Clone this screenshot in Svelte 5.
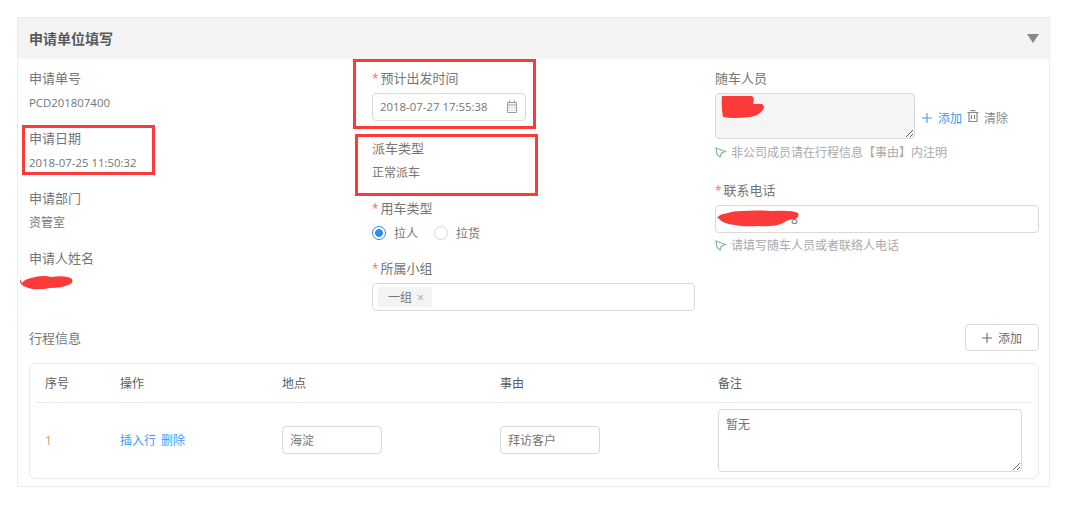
<script>
  const leftFields = [
    { label: '申请单号', value: 'PCD201807400', latin: true },
    { label: '申请日期', value: '2018-07-25 11:50:32', latin: true },
    { label: '申请部门', value: '资管室' },
    { label: '申请人姓名', value: '' },
  ]
</script>

{#snippet hintIcon()}
  <svg width="12" height="11" viewBox="0 0 12 11" fill="none" stroke="#7dbb8c" stroke-width="1.2">
    <path d="M1 1l9.500 3.500-4 1.500-1.500 4-3-2.500-1-6.500z" />
  </svg>
{/snippet}

{#snippet plusIcon()}
  <svg class="plus" width="10" height="10" viewBox="0 0 10 10" fill="none" stroke="currentColor" stroke-width="1.100">
    <path d="M5 0v10M0 5h10" />
  </svg>
{/snippet}

<div class="card">
  <div class="card-head">
    <span class="title">申请单位填写</span>
    <span class="caret"></span>
  </div>
  <div class="card-body">
    <div class="columns">
      <div class="col">
        {#each leftFields as f}
          <div class="field">
            <div class="label">{f.label}</div>
            <div class="value" class:latin={f.latin}>{f.value}</div>
          </div>
        {/each}
      </div>

      <div class="col">
        <div class="field tall">
          <div class="label"><i>*</i>预计出发时间</div>
          <div class="input date">
            <span class="latin">2018-07-27 17:55:38</span>
            <svg width="12" height="13" viewBox="0 0 12 13" fill="none" stroke="#999">
              <path d="M1.500 2.500h9v10h-9zM1.500 5h9M3.500 .5v2M8.500 .5v2" />
              <path d="M3 7.500h1M5.500 7.500h1M8 7.500h1M3 10h1M5.500 10h1M8 10h1" stroke="#aaa" />
            </svg>
          </div>
        </div>
        <div class="field">
          <div class="label">派车类型</div>
          <div class="value">正常派车</div>
        </div>
        <div class="field">
          <div class="label"><i>*</i>用车类型</div>
          <div class="radios">
            <span class="radio on"></span><span class="radio-text">拉人</span>
            <span class="radio"></span><span class="radio-text">拉货</span>
          </div>
        </div>
        <div class="field">
          <div class="label"><i>*</i>所属小组</div>
          <div class="input tags">
            <span class="tag">一组<b>×</b></span>
          </div>
        </div>
      </div>

      <div class="col">
        <div class="label"><span>随车人员</span></div>
        <div class="people">
          <textarea class="people-area" disabled></textarea>
          <span class="link add">{@render plusIcon()}添加</span>
          <svg class="trash" width="12" height="12" viewBox="0 0 12 12" fill="none" stroke="#8a8a8a" stroke-width="1.200">
            <path d="M.5 2.500h11M2 2.500v9h8v-9M3.500 .7h5M4.500 5v4M7.500 5v4" />
          </svg>
          <span class="clear">清除</span>
        </div>
        <div class="hint">
          {@render hintIcon()}
          非公司成员请在行程信息【事由】内注明
        </div>
        <div class="label phone"><i>*</i>联系电话</div>
        <div class="input phone-input"><span>8</span></div>
        <div class="hint second">
          {@render hintIcon()}
          请填写随车人员或者联络人电话
        </div>
      </div>
    </div>

    <div class="trip-head">
      <span class="label">行程信息</span>
      <button class="add-btn">{@render plusIcon()}添加</button>
    </div>

    <div class="trip">
      <div class="row head">
        <span class="no">序号</span>
        <span class="op">操作</span>
        <span class="place">地点</span>
        <span class="reason">事由</span>
        <span>备注</span>
      </div>
      <div class="row">
        <span class="no num">1</span>
        <span class="op link"><span>插入行</span><span>删除</span></span>
        <span class="place"><span class="input small">海淀</span></span>
        <span class="reason"><span class="input small">拜访客户</span></span>
        <textarea class="note">暂无</textarea>
      </div>
    </div>
  </div>
</div>

<!-- red marks drawn over the screenshot -->
<div class="mark" style="left:22px;top:125px;width:133px;height:50px"></div>
<div class="mark" style="left:353px;top:59px;width:183px;height:70px"></div>
<div class="mark" style="left:355px;top:134px;width:183px;height:62px"></div>
<svg class="scribble" width="1066" height="505" fill="#fd3a3a">
  <path d="M722 96h30q3 2 1 8h9q4 3 0 7-4 5-12 6-18 2-27 0-2-10-1-21z" />
  <path d="M717 218q2-4 11-5 4-2 14-2 14-1 30 0 20-1 26 2 2 4-3 6-6 0-12 4-8 4-24 3-16 1-24-1-12-1-17-7z" />
  <path d="M22 283q2-4 13-6 9-2 16 0 16-2 21 2 2 4-4 6-6 3-18 3-16 3-24-1-7-2-6-8z" />
</svg>

<style>
  :global(body) {
    margin: 0;
    background: #fff;
  }
  .card {
    box-sizing: border-box;
    width: 1033px;
    height: 470px;
    margin: 17px 0 0 17px;
    border: 1px solid #ececec;
    font-family: 'Open Sans', 'Noto Sans CJK SC', sans-serif;
    font-size: 12px;
    color: #757575;
  }
  .card-head {
    box-sizing: border-box;
    display: flex;
    align-items: center;
    justify-content: space-between;
    height: 41px;
    padding: 0 10px 1px 11px;
    background: #f4f4f4;
  }
  .title {
    font-size: 14px;
    font-weight: 700;
    color: #5a5a5a;
  }
  .caret {
    width: 0;
    height: 0;
    border-left: 6.500px solid transparent;
    border-right: 6.500px solid transparent;
    border-top: 9px solid #888;
  }
  .card-body {
    padding: 10px 10px 0 11px;
  }
  .columns {
    display: grid;
    grid-template-columns: 343px 343px 324px;
    height: 255px;
  }
  .col:nth-child(2) {
    padding-right: 20px;
  }
  .field {
    height: 60px;
  }
  .field.tall {
    height: 70px;
  }
  .label {
    font-size: 13px;
    line-height: 18px;
    height: 20px;
    color: #757575;
  }
  .label i {
    font-style: normal;
    color: #f56c6c;
    margin-right: 2px;
    font-size: 12px;
  }
  .value {
    margin-top: 5px;
    line-height: 18px;
  }
  .latin {
    font-size: 11.400px;
  }
  .input {
    box-sizing: border-box;
    display: flex;
    align-items: center;
    height: 28px;
    margin-top: 4px;
    padding: 0 7px;
    border: 1px solid #d9d9d9;
    border-radius: 4px;
    background: #fff;
  }
  .date {
    justify-content: space-between;
    width: 154px;
    padding-bottom: 1px;
  }
  .radios {
    display: flex;
    align-items: center;
    height: 18px;
    margin-top: 5px;
  }
  .radio {
    box-sizing: border-box;
    width: 14px;
    height: 14px;
    border: 1px solid #d9d9d9;
    border-radius: 50%;
  }
  .radio.on {
    border-color: #2d8cf0;
    background: radial-gradient(circle, #2d8cf0 0 3.600px, #fff 4.200px);
  }
  .radio-text {
    margin: 0 16px 0 8px;
  }
  .tags {
    padding: 0 5px;
  }
  .tag {
    display: flex;
    align-items: center;
    height: 20px;
    padding: 0 8px 0 10px;
    border-radius: 3px;
    background: #f3f3f3;
  }
  .tag b {
    font-weight: 400;
    margin-left: 5px;
    color: #a5a5a5;
  }
  .people {
    display: flex;
    align-items: center;
    margin-top: 4px;
    height: 46px;
  }
  .people-area {
    box-sizing: border-box;
    flex: none;
    width: 200px;
    height: 46px;
    margin: 0 7px 0 0;
    border: 1px solid #d9d9d9;
    border-radius: 4px;
    background: #f5f5f5;
    resize: both;
    outline: none;
  }
  .add {
    display: flex;
    align-items: center;
    margin-right: 5px;
    padding-top: 3px;
  }
  .plus {
    margin-right: 6px;
  }
  .trash {
    margin-right: 5px;
  }
  .clear {
    color: #8a8a8a;
    padding-top: 3px;
  }
  .link {
    color: #3d9bf5;
  }
  .hint {
    display: flex;
    align-items: center;
    gap: 4px;
    height: 20px;
    margin-top: 3px;
    color: #aaa;
  }
  .hint.second {
    margin-top: 2px;
  }
  .phone {
    margin-top: 19px;
  }
  .phone-input span {
    margin-left: 68px;
  }
  .trip-head {
    display: flex;
    align-items: center;
    justify-content: space-between;
    height: 27px;
  }
  .trip-head .label {
    padding-top: 3px;
  }
  .add-btn {
    box-sizing: border-box;
    display: flex;
    align-items: center;
    justify-content: center;
    width: 74px;
    height: 27px;
    padding: 0;
    border: 1px solid #d9d9d9;
    border-radius: 4px;
    background: #fff;
    font: inherit;
    color: #6a6a6a;
  }
  .trip {
    box-sizing: border-box;
    height: 116px;
    margin-top: 12px;
    padding: 0 8px 0 7px;
    border: 1px solid #e8e8e8;
    border-radius: 6px;
  }
  .row {
    display: flex;
    align-items: center;
    height: 74px;
  }
  .row.head {
    box-sizing: border-box;
    height: 39px;
    border-bottom: 1px solid #e8e8e8;
    color: #5a5a5a;
  }
  .row > span:first-child {
    padding-left: 8px;
  }
  .no {
    width: 75px;
  }
  .num {
    color: #bfa25e;
  }
  .op {
    display: flex;
    gap: 5px;
    width: 162px;
  }
  .place, .reason {
    width: 218px;
  }
  .small {
    width: 100px;
    margin-top: 0;
    padding: 0 7px;
  }
  .note {
    box-sizing: border-box;
    width: 304px;
    height: 63px;
    margin: 1px 0 0;
    padding: 5px 7px;
    border: 1px solid #d9d9d9;
    border-radius: 4px;
    font: inherit;
    color: #757575;
    resize: both;
    outline: none;
  }
  .mark {
    position: absolute;
    box-sizing: border-box;
    border: 3px solid #fd3a3a;
  }
  .scribble {
    position: absolute;
    left: 0;
    top: 0;
    pointer-events: none;
  }
</style>
